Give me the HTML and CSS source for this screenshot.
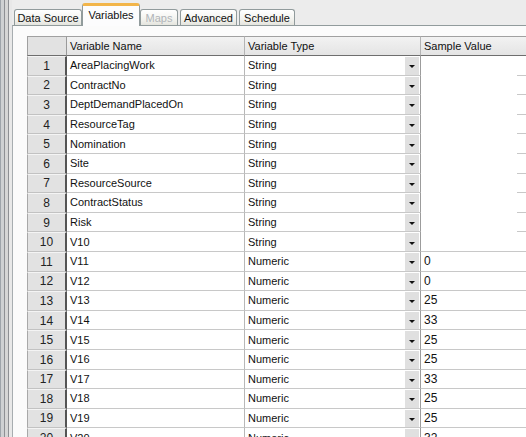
FILE: index.html
```html
<!DOCTYPE html>
<html>
<head>
<meta charset="utf-8">
<link rel="stylesheet" href="styles.css">
</head>
<body>
<div class="win">
  <div class="edge"></div>
  <div class="main">
    <div class="tabs">
      <div class="tab t-ds">Data Source</div>
      <div class="tab sel t-var">Variables</div>
      <div class="tab dis t-maps">Maps</div>
      <div class="tab t-adv">Advanced</div>
      <div class="tab t-sch">Schedule</div>
    </div>
    <div class="panel">
      <div class="grid">
        <div class="hc corner"></div>
        <div class="hc">Variable Name</div>
        <div class="hc">Variable Type</div>
        <div class="hc hs">Sample Value</div>
        <div class="hc hx"></div>

        <div class="rn">1</div><div class="c nm">AreaPlacingWork</div><div class="c ty"><span>String</span><i class="dd"></i></div><div class="c sv open"></div><div class="c ex"></div>
        <div class="rn">2</div><div class="c nm">ContractNo</div><div class="c ty"><span>String</span><i class="dd"></i></div><div class="c sv open"></div><div class="c ex"></div>
        <div class="rn">3</div><div class="c nm">DeptDemandPlacedOn</div><div class="c ty"><span>String</span><i class="dd"></i></div><div class="c sv open"></div><div class="c ex"></div>
        <div class="rn">4</div><div class="c nm">ResourceTag</div><div class="c ty"><span>String</span><i class="dd"></i></div><div class="c sv open"></div><div class="c ex"></div>
        <div class="rn">5</div><div class="c nm">Nomination</div><div class="c ty"><span>String</span><i class="dd"></i></div><div class="c sv open"></div><div class="c ex"></div>
        <div class="rn">6</div><div class="c nm">Site</div><div class="c ty"><span>String</span><i class="dd"></i></div><div class="c sv open"></div><div class="c ex"></div>
        <div class="rn">7</div><div class="c nm">ResourceSource</div><div class="c ty"><span>String</span><i class="dd"></i></div><div class="c sv open"></div><div class="c ex"></div>
        <div class="rn">8</div><div class="c nm">ContractStatus</div><div class="c ty"><span>String</span><i class="dd"></i></div><div class="c sv open"></div><div class="c ex"></div>
        <div class="rn">9</div><div class="c nm">Risk</div><div class="c ty"><span>String</span><i class="dd"></i></div><div class="c sv open"></div><div class="c ex"></div>
        <div class="rn">10</div><div class="c nm">V10</div><div class="c ty"><span>String</span><i class="dd"></i></div><div class="c sv"></div><div class="c ex"></div>
        <div class="rn">11</div><div class="c nm">V11</div><div class="c ty"><span>Numeric</span><i class="dd"></i></div><div class="c sv">0</div><div class="c ex"></div>
        <div class="rn">12</div><div class="c nm">V12</div><div class="c ty"><span>Numeric</span><i class="dd"></i></div><div class="c sv">0</div><div class="c ex"></div>
        <div class="rn">13</div><div class="c nm">V13</div><div class="c ty"><span>Numeric</span><i class="dd"></i></div><div class="c sv">25</div><div class="c ex"></div>
        <div class="rn">14</div><div class="c nm">V14</div><div class="c ty"><span>Numeric</span><i class="dd"></i></div><div class="c sv">33</div><div class="c ex"></div>
        <div class="rn">15</div><div class="c nm">V15</div><div class="c ty"><span>Numeric</span><i class="dd"></i></div><div class="c sv">25</div><div class="c ex"></div>
        <div class="rn">16</div><div class="c nm">V16</div><div class="c ty"><span>Numeric</span><i class="dd"></i></div><div class="c sv">25</div><div class="c ex"></div>
        <div class="rn">17</div><div class="c nm">V17</div><div class="c ty"><span>Numeric</span><i class="dd"></i></div><div class="c sv">33</div><div class="c ex"></div>
        <div class="rn">18</div><div class="c nm">V18</div><div class="c ty"><span>Numeric</span><i class="dd"></i></div><div class="c sv">25</div><div class="c ex"></div>
        <div class="rn">19</div><div class="c nm">V19</div><div class="c ty"><span>Numeric</span><i class="dd"></i></div><div class="c sv">25</div><div class="c ex"></div>
        <div class="rn">20</div><div class="c nm">V20</div><div class="c ty"><span>Numeric</span><i class="dd"></i></div><div class="c sv">32</div><div class="c ex"></div>
      </div>
    </div>
  </div>
</div>
</body>
</html>
```
FILE: styles.css
```css
html, body {
  margin: 0;
  padding: 0;
}
body {
  width: 526px;
  height: 437px;
  overflow: hidden;
  background: #ececec;
  font-family: "Liberation Sans", Arial, sans-serif;
  font-size: 11px;
  color: #111;
}
.win {
  display: flex;
  height: 437px;
}
.edge {
  flex: none;
  width: 12px;
  background: linear-gradient(90deg,
    #9ea4aa 0, #9ea4aa 1px,
    #cfd1d3 1px, #cfd1d3 4px,
    #8e9094 4px, #8e9094 5px,
    #d6d6d6 5px, #d6d6d6 8px,
    #8e9094 8px, #8e9094 9px,
    #e8e8e8 9px, #e8e8e8 12px);
}
.main {
  flex: 1;
  min-width: 0;
  display: flex;
  flex-direction: column;
}
.tabs {
  flex: none;
  height: 25px;
  display: flex;
  align-items: flex-end;
  padding-left: 2px;
  position: relative;
  z-index: 2;
}
.tab {
  box-sizing: border-box;
  height: 16px;
  border: 1px solid #919b9c;
  border-bottom: none;
  border-radius: 3px 3px 0 0;
  background: linear-gradient(#ffffff, #f3f3ef 60%, #e4e4de);
  display: flex;
  align-items: center;
  justify-content: center;
  padding-top: 1px;
  white-space: nowrap;
  color: #111;
}
.tab + .tab { margin-left: 1px; }
.t-ds { width: 68px; }
.t-var { width: 58px; }
.t-maps { width: 38px; }
.t-adv { width: 57px; margin-left: 2px !important; }
.t-sch { width: 56px; margin-left: 2px !important; }
.tab.sel {
  height: 23px;
  margin-bottom: -1px;
  margin-left: 0;
  border-top: 3px solid #f2b54a;
  background: #fcfcfd;
  align-items: flex-start;
  padding-top: 3px;
}
.tab.sel + .tab { margin-left: 0; }
.tab.dis { color: #b0b4b8; }
.panel {
  flex: 1;
  border-top: 1px solid #919b9c;
  border-left: 1px solid #a7adb0;
  background: #fbfbfb;
  padding: 10px 0 0 14px;
  overflow: hidden;
}
.grid {
  display: grid;
  grid-template-columns: 40px 178px 176px 96px 80px;
  grid-template-rows: 20px;
  grid-auto-rows: 19.6px;
  width: 570px;
  background: #fff;
}
.hc {
  box-sizing: border-box;
  background: linear-gradient(#f2f2f2, #e4e4e4);
  border-top: 1px solid #a0a0a0;
  border-right: 1px solid #b4b4b4;
  border-bottom: 1px solid #6e6e6e;
  display: flex;
  align-items: center;
  padding-left: 3px;
  white-space: nowrap;
}
.hc.corner {
  border-left: 1px solid #a0a0a0;
  border-right: 1px solid #9a9a9a;
  background: #e2e2e2;
}
.hc.hs, .hc.hx { border-right: none; }
.rn {
  box-sizing: border-box;
  background: #e2e2e2;
  border-left: 1px solid #a8a8a8;
  border-right: 2px solid #555;
  border-bottom: 1px solid #c2c2c2;
  border-top: 1px solid #f4f4f4;
  display: flex;
  align-items: center;
  justify-content: center;
  font-size: 12px;
  color: #222;
}
.c {
  box-sizing: border-box;
  border-bottom: 1px solid #c8c8c8;
  display: flex;
  align-items: center;
  padding-left: 3px;
  white-space: nowrap;
  overflow: hidden;
}
.nm { border-right: 1px solid #b8b8b8; }
.ty {
  border-right: 1px solid #9c9c9c;
  justify-content: space-between;
  align-items: stretch;
}
.ty span {
  display: flex;
  align-items: center;
}
.dd {
  flex: none;
  width: 14px;
  margin: 1px 1px 0 0;
  background: #e0e0e0;
  display: flex;
  align-items: center;
  justify-content: center;
}
.dd::after {
  content: "";
  width: 0;
  height: 0;
  margin-top: 2px;
  border-left: 3px solid transparent;
  border-right: 3px solid transparent;
  border-top: 3px solid #111;
}
.sv { font-size: 12px; }
.sv.open { border-bottom-color: transparent; }
.ex { border-bottom-color: #c8c8c8; }
```
